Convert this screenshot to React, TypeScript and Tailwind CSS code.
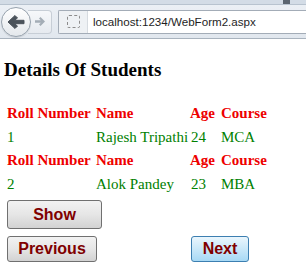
import React from "react";

const students = [
  { roll: "1", name: "Rajesh Tripathi", age: "24", course: "MCA" },
  { roll: "2", name: "Alok Pandey", age: "23", course: "MBA" },
];

const BrowserBar = () => (
  <div className="relative h-[39px] bg-gradient-to-b from-[#edf1f6] to-[#e1e7ee] border-b border-[#a9b3be]">
    {/* tab strip */}
    <div className="h-[5px] bg-[#d3dce6] border-b border-[#b8c3cf] flex justify-end">
      <div className="w-[7px] h-full bg-[#5b6570] mr-[16px]" />
    </div>
    <div className="flex items-center h-[33px]">
      {/* back */}
      <div className="ml-[1px] w-[30px] h-[30px] rounded-full border border-[#97a2ad] bg-gradient-to-b from-white to-[#e4e8ec] flex items-center justify-center z-10 shadow-[0_1px_1px_rgba(0,0,0,0.1)]">
        <svg width="18" height="16" viewBox="0 0 18 16">
          <path d="M1 8 L8 1.5 L10.5 4 L7.5 6.3 L17 6.3 L17 9.7 L7.5 9.7 L10.5 12 L8 14.5 Z" fill="#4b535b" strokeLinejoin="round" stroke="#4b535b" strokeWidth="1" />
        </svg>
      </div>
      {/* forward */}
      <div className="-ml-[3px] w-[24px] h-[24px] rounded-r-[4px] border border-l-0 border-[#c7ced6] bg-gradient-to-b from-[#f6f8fa] to-[#e6eaef] flex items-center justify-center">
        <svg width="12" height="11" viewBox="0 0 12 11">
          <path d="M11 5.5 L6.5 1 L5 2.5 L6.8 4.2 L1 4.2 L1 6.8 L6.8 6.8 L5 8.5 L6.5 10 Z" fill="#a4adb6" />
        </svg>
      </div>
      {/* url bar */}
      <div className="ml-[6px] flex-1 h-[24px] flex items-center border border-[#a3acb7] border-r-0 bg-white rounded-l-[2px] overflow-hidden">
        <div className="w-[29px] h-full bg-[#eef1f4] border-r border-[#d6dbe0] flex items-center justify-center">
          <div className="w-[13px] h-[13px] border border-dashed border-[#8c8c8c] rounded-[2px]" />
        </div>
        <span className="ml-[5px] text-[11.6px] text-[#1e1e1e] font-['Liberation_Sans',Arial,sans-serif] whitespace-nowrap">
          localhost:1234/WebForm2.aspx
        </span>
      </div>
    </div>
  </div>
);

const Btn = ({ label, className }: { label: string; className: string }) => (
  <button
    className={`rounded-[3px] border font-bold text-[16px] text-[#800000] font-['Liberation_Sans',Arial,sans-serif] leading-none ${className}`}
  >
    {label}
  </button>
);

export default function App() {
  return (
    <div className="w-[306px] h-[273px] bg-white overflow-hidden">
      <BrowserBar />
      <div className="font-['Liberation_Serif','Times_New_Roman',serif]">
        <h3 className="mt-[20px] pl-[4px] text-[19px] leading-[22px] font-bold text-black">
          Details Of Students
        </h3>
        <div className="mt-[21px] pl-[7px] grid grid-cols-[89px_94px_31px_auto] text-[15px]">
          {students.map((s) => (
            <React.Fragment key={s.roll}>
              <div className="h-[23px] leading-[23px] font-bold text-[#ee0000]">Roll Number</div>
              <div className="h-[23px] leading-[23px] font-bold text-[#ee0000]">Name</div>
              <div className="h-[23px] leading-[23px] font-bold text-[#ee0000]">Age</div>
              <div className="h-[23px] leading-[23px] font-bold text-[#ee0000]">Course</div>
              <div className="h-[24px] leading-[24px] text-[#008000]">{s.roll}</div>
              <div className="h-[24px] leading-[24px] text-[#008000] whitespace-nowrap">{s.name}</div>
              <div className="h-[24px] leading-[24px] text-[#008000] pl-[1px]">{s.age}</div>
              <div className="h-[24px] leading-[24px] text-[#008000]">{s.course}</div>
            </React.Fragment>
          ))}
        </div>
        <div className="pl-[7px] mt-[4px]">
          <Btn
            label="Show"
            className="w-[95px] h-[29px] border-[#707070] bg-gradient-to-b from-[#f2f2f2] via-[#e6e6e6] to-[#d2d2d2]"
          />
        </div>
        <div className="pl-[7px] mt-[7px] flex">
          <Btn
            label="Previous"
            className="w-[90px] h-[26px] border-[#707070] bg-gradient-to-b from-[#f2f2f2] via-[#e6e6e6] to-[#d2d2d2]"
          />
          <Btn
            label="Next"
            className="ml-[94px] w-[58px] h-[26px] border-[#3c7fb1] bg-gradient-to-b from-[#eaf6fd] via-[#c9e8f9] to-[#a7d9f5]"
          />
        </div>
      </div>
    </div>
  );
}
